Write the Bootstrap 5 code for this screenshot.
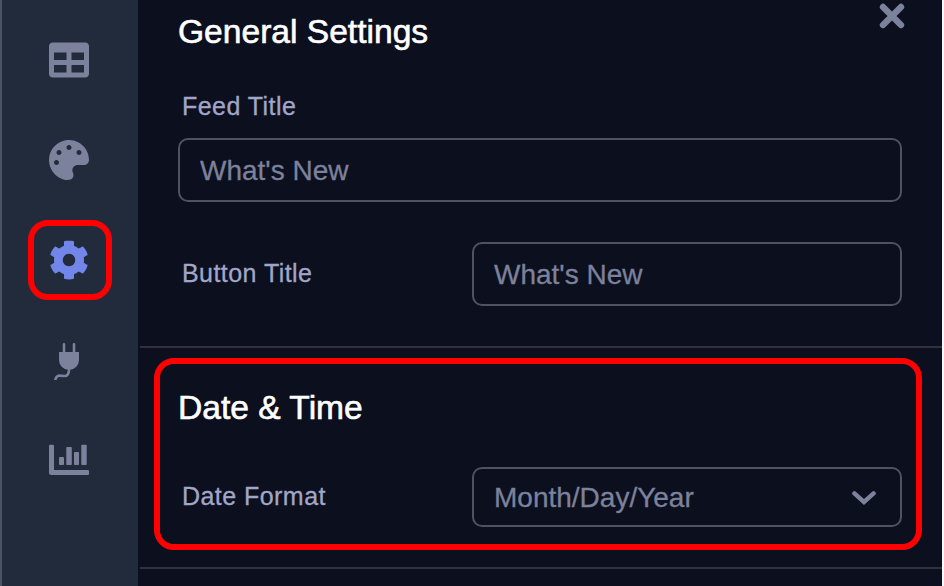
<!DOCTYPE html>
<html lang="en">
<head>
<meta charset="utf-8">
<meta name="viewport" content="width=device-width, initial-scale=1">
<title>General Settings</title>
<link href="https://cdn.jsdelivr.net/npm/bootstrap@5.3.0/dist/css/bootstrap.min.css" rel="stylesheet">
<style>
  body { font-family: "Liberation Sans", Arial, sans-serif; background: #0c0f1e; height: 586px; }
  .app { height: 586px; border-right: 2px solid #f7f7fb; }
  .side { width: 138px; background: #222b3c; border-left: 2px solid #4a5463; padding: 10px 2px 0 0; color: #7c819c; }
  .side-item { height: 100px; width: 100%; color: inherit; }
  .side-item.active { color: #7186e8; }
  .side-item svg { width: 40px; height: 40px; display: block; fill: currentColor; }
  .marker { position: absolute; border: 6px solid #f00; border-radius: 20px; pointer-events: none; }
  .marker-tab { width: 84px; height: 80px; left: 26px; top: 10px; }
  .marker-section { inset: 10px 20px 17px 14px; }
  .pane { margin-left: 2px; background: #0c0f1e; }
  .group { padding: 0 40px 0 38px; border-bottom: 2px solid #30333f; }
  .group-general { height: 348px; }
  .group-date { height: 221px; }
  .group-title { font-size: 33.6px; line-height: 40px; font-weight: 400; color: #fff; -webkit-text-stroke: .6px #fff; }
  .group-general .group-title { padding-top: 12px; }
  .group-date .group-title { padding-top: 40px; }
  .field-label { font-size: 25px; line-height: 30px; letter-spacing: .45px; color: #a1a6c8; padding-left: 4px; -webkit-text-stroke: .3px #a1a6c8; }
  .field-feed { margin-top: 39px; }
  .field-feed .field-box { margin-top: 17px; }
  .field-button { margin-top: 40px; }
  .field-button .field-label, .field-date .field-label { margin-bottom: 3px; }
  .field-date { margin-top: 39px; }
  .field-box, .field-box:focus { background: transparent; color: #7c819c; border: 2px solid #4f5262; border-radius: 10px; font-size: 28px; line-height: 36px; height: 64px; padding: 2px 20px 0; box-shadow: none; -webkit-text-stroke: .3px #7c819c; }
  .field-box::placeholder { color: #7c819c; opacity: 1; }
  .field-half { width: 430px; flex: none; }
  .field-select { height: 60px; }
  .close-btn { position: absolute; right: 37px; top: 3px; width: 26px; height: 26px; }
</style>
</head>
<body class="overflow-hidden">
<div class="app d-flex">
  <nav class="side d-flex flex-column flex-shrink-0">
    <a class="side-item d-flex align-items-center justify-content-center" href="#" aria-label="Layout">
      <svg viewBox="0 0 512 512"><path d="M464 32H48C21.49 32 0 53.49 0 80v352c0 26.51 21.49 48 48 48h416c26.51 0 48-21.49 48-48V80c0-26.51-21.49-48-48-48zM224 416H64v-96h160v96zm0-160H64v-96h160v96zm224 160H288v-96h160v96zm0-160H288v-96h160v96z"/></svg>
    </a>
    <a class="side-item d-flex align-items-center justify-content-center" href="#" aria-label="Theme">
      <svg viewBox="0 0 512 512"><path d="M204.3 5C104.9 24.4 24.8 104.3 5.2 203.4c-37 187 131.7 326.4 258.8 306.7 41.2-6.4 61.4-54.6 42.5-91.7-23.1-45.4 9.9-98.4 60.9-98.4h79.7c35.8 0 64.8-29.6 64.9-65.3C511.500 97.100 368.100-26.900 204.300 5zM96 320c-17.700 0-32-14.300-32-32s14.300-32 32-32 32 14.300 32 32-14.300 32-32 32zm32-128c-17.700 0-32-14.300-32-32s14.300-32 32-32 32 14.300 32 32-14.300 32-32 32zm128-64c-17.700 0-32-14.300-32-32s14.300-32 32-32 32 14.300 32 32-14.300 32-32 32zm128 64c-17.700 0-32-14.300-32-32s14.300-32 32-32 32 14.300 32 32-14.300 32-32 32z"/></svg>
    </a>
    <a class="side-item active position-relative d-flex align-items-center justify-content-center" href="#" aria-label="Settings">
      <svg viewBox="0 0 512 512"><path d="M487.4 315.7l-42.600-24.600c4.300-23.200 4.300-47 0-70.200l42.600-24.600c4.900-2.800 7.100-8.600 5.500-14-11.100-35.600-30-67.800-54.700-94.600-3.800-4.100-10-5.100-14.800-2.300L380.800 110c-17.900-15.400-38.500-27.300-60.800-35.100V25.800c0-5.600-3.900-10.500-9.400-11.700-36.700-8.200-74.300-7.800-109.200 0-5.500 1.200-9.400 6.100-9.400 11.700V75c-22.200 7.900-42.800 19.800-60.800 35.100L88.700 85.500c-4.900-2.800-11-1.900-14.800 2.300-24.700 26.700-43.600 58.900-54.700 94.600-1.700 5.400.6 11.200 5.500 14L67.300 221c-4.300 23.200-4.300 47 0 70.200l-42.600 24.600c-4.900 2.800-7.100 8.600-5.500 14 11.100 35.600 30 67.800 54.700 94.600 3.800 4.100 10 5.100 14.800 2.300l42.600-24.600c17.900 15.400 38.500 27.300 60.800 35.100v49.200c0 5.600 3.900 10.500 9.400 11.700 36.700 8.200 74.300 7.800 109.200 0 5.500-1.200 9.400-6.100 9.400-11.700v-49.200c22.200-7.900 42.800-19.800 60.800-35.100l42.600 24.600c4.900 2.800 11 1.900 14.800-2.300 24.700-26.700 43.600-58.900 54.700-94.600 1.500-5.500-.7-11.300-5.600-14.100zM256 336c-44.100 0-80-35.900-80-80s35.900-80 80-80 80 35.900 80 80-35.900 80-80 80z"/></svg>
      <span class="marker marker-tab"></span>
    </a>
    <a class="side-item d-flex align-items-center justify-content-center" href="#" aria-label="Integrations">
      <svg viewBox="0 0 40 40"><path d="M13.700 13V4.300a1.300 1.300 0 0 1 2.600 0V12h7.400V4.300a1.300 1.300 0 0 1 2.600 0V12H29.500q.5 0 .5.500V20a10 10 0 0 1-20 0v-7.500q0-.5.5-.5h3.200z"/><path d="M20 29.500c0 4.500-1.800 7-5.200 6.500-4.500-.8-7.200-1.100-8.600 4" fill="none" stroke="currentColor" stroke-width="2.600"/></svg>
    </a>
    <a class="side-item d-flex align-items-center justify-content-center" href="#" aria-label="Analytics">
      <svg viewBox="0 0 40 40"><path d="M1 4.700h3q1 0 1 1V30h34q1 0 1 1v3q0 1-1 1H2.500Q0 35 0 32.500V5.700q0-1 1-1z"/><rect x="10" y="17" width="5" height="8" rx=".8"/><rect x="17.300" y="7" width="5.500" height="18" rx=".8"/><rect x="25" y="12" width="5" height="13" rx=".8"/><rect x="32.300" y="4.700" width="5.400" height="20.300" rx=".8"/></svg>
    </a>
  </nav>

  <main class="pane flex-grow-1 position-relative">
    <section class="group group-general">
      <h2 class="group-title mb-0">General Settings</h2>
      <div class="field-feed">
        <label class="field-label d-block" for="feed">Feed Title</label>
        <input id="feed" class="form-control field-box" type="text" placeholder="What's New">
      </div>
      <div class="field-button d-flex align-items-center justify-content-between">
        <label class="field-label" for="btnTitle">Button Title</label>
        <input id="btnTitle" class="form-control field-box field-half" type="text" placeholder="What's New">
      </div>
    </section>
    <section class="group group-date position-relative">
      <h2 class="group-title mb-0">Date &amp; Time</h2>
      <div class="field-date d-flex align-items-center justify-content-between">
        <label class="field-label">Date Format</label>
        <button type="button" class="btn field-box field-half field-select d-flex align-items-center justify-content-between">
          <span>Month/Day/Year</span>
          <svg class="me-1" width="24" height="14" viewBox="0 0 24 14" fill="none" stroke="currentColor" stroke-width="4.400" stroke-linecap="round" stroke-linejoin="miter"><path d="M2.400 2.400 12 11l9.600-8.600"/></svg>
        </button>
      </div>
      <div class="marker marker-section"></div>
    </section>
    <svg class="close-btn" viewBox="0 0 26 26" fill="none" stroke="#7c819c" stroke-width="6.400" stroke-linecap="round"><path d="M4 4l18 18M22 4 4 22"/></svg>
  </main>
</div>
<script src="https://cdn.jsdelivr.net/npm/bootstrap@5.3.0/dist/js/bootstrap.bundle.min.js"></script>
</body>
</html>
